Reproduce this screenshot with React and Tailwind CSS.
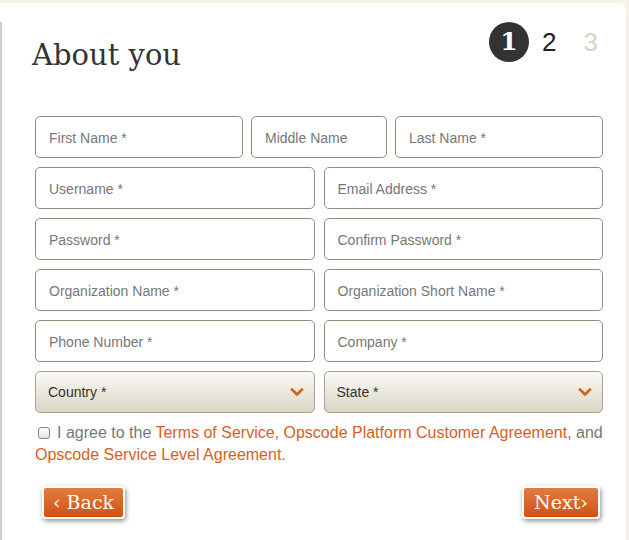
import React from 'react';

const Field = ({ label }) => (
  <div className="h-[42px] rounded-[5px] border border-[#928e7c] bg-white flex items-center pl-[13px] pt-[2px] text-[14px] text-[#777]">
    {label}
  </div>
);

const Select = ({ label }) => (
  <div className="h-[42px] rounded-[5px] border border-[#a5a290] bg-gradient-to-b from-[#fbfaf6] to-[#d9d6c4] flex items-center justify-between pl-[12px] pr-[10px] text-[14px] text-[#333]">
    <span>{label}</span>
    <svg width="14" height="10" viewBox="0 0 14 10">
      <polyline points="2,2.5 7,7.5 12,2.5" fill="none" stroke="#d9621f" strokeWidth="2.8" strokeLinecap="round" strokeLinejoin="round" />
    </svg>
  </div>
);

const OrangeButton = ({ children, className }) => (
  <button className={"h-[33px] rounded-[4px] border-2 border-white bg-gradient-to-b from-[#e17c3f] to-[#d1510b] text-white text-[19px] shadow-[1px_2px_5px_rgba(0,0,0,0.45)] " + className} style={{ fontFamily: '"DejaVu Serif", serif' }}>
    {children}
  </button>
);

export default function App() {
  return (
    <div className="w-[629px] h-[540px] bg-[#f4f1e6] pt-[3px] pr-[3px] overflow-hidden" style={{ fontFamily: '"Liberation Sans", Arial, sans-serif' }}>
      <div className="h-[537px] bg-white rounded-tr-[7px] flex">
        <div className="w-[2px] mt-[19px] bg-[#cfcfcf]" />
        <div className="flex-1">
          <div className="flex items-start justify-between h-[40px] mt-[19px] pl-[30px] pr-[28px]">
            <h1 className="text-[29px] text-[#333] leading-none mt-[19px]" style={{ fontFamily: '"DejaVu Serif", serif' }}>About you</h1>
            <div className="flex items-center">
              <div className="w-[40px] h-[40px] rounded-full bg-[#333] text-white flex items-center justify-center text-[25px] font-bold" style={{ fontFamily: '"DejaVu Serif", serif' }}>1</div>
              <span className="ml-[13px] text-[26px] text-[#222]">2</span>
              <span className="ml-[27px] text-[26px] text-[#d9d5c6]">3</span>
            </div>
          </div>

          <form className="ml-[33px] w-[568px] mt-[54px] flex flex-col gap-[9px]">
            <div className="grid grid-cols-[208px_136px_208px] gap-[8px]">
              <Field label="First Name *" />
              <Field label="Middle Name" />
              <Field label="Last Name *" />
            </div>
            <div className="grid grid-cols-2 gap-[9px]">
              <Field label="Username *" />
              <Field label="Email Address *" />
            </div>
            <div className="grid grid-cols-2 gap-[9px]">
              <Field label="Password *" />
              <Field label="Confirm Password *" />
            </div>
            <div className="grid grid-cols-2 gap-[9px]">
              <Field label="Organization Name *" />
              <Field label="Organization Short Name *" />
            </div>
            <div className="grid grid-cols-2 gap-[9px]">
              <Field label="Phone Number *" />
              <Field label="Company *" />
            </div>
            <div className="grid grid-cols-2 gap-[9px]">
              <Select label="Country *" />
              <Select label="State *" />
            </div>
          </form>

          <p className="ml-[33px] w-[585px] mt-[9px] text-[16px] leading-[22px] text-[#777]">
            <span className="inline-block align-[-1px] w-[12px] h-[12px] ml-[3px] mr-[7px] rounded-[3px] border border-[#888] bg-gradient-to-b from-white to-[#e4e4e4]" />
            I agree to the <a className="text-[#d5601f]">Terms of Service</a>, <a className="text-[#d5601f]">Opscode Platform Customer Agreement</a>, and <a className="text-[#d5601f]">Opscode Service Level Agreement</a>.
          </p>

          <div className="flex justify-between ml-[40px] mr-[26px] mt-[20px]">
            <OrangeButton className="w-[83px]">‹ Back</OrangeButton>
            <OrangeButton className="w-[78px]">Next›</OrangeButton>
          </div>
        </div>
      </div>
    </div>
  );
}
